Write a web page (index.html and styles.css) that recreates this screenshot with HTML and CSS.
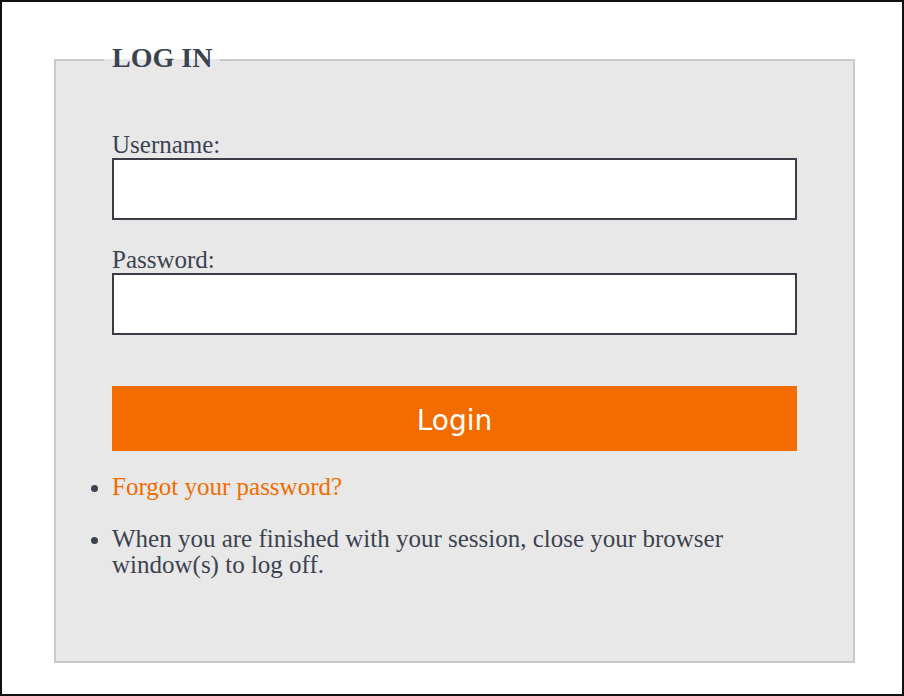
FILE: index.html
```html
<!DOCTYPE html>
<html lang="en">
<head>
    <meta charset="UTF-8">
    <meta name="viewport" content="width=device-width, initial-scale=1.0">
    <title>Log In</title>
    <link rel="stylesheet" href="styles.css">
</head>
<body>
<div class="page">
    <fieldset class="login-box">
        <legend>LOG IN</legend>

        <form id="loginForm">
            <label for="username">Username:</label>
            <input type="text" id="username" name="username">

            <label for="password">Password:</label>
            <input type="password" id="password" name="password">

            <button type="submit">Login</button>
        </form>

        <ul class="notes">
            <li><a href="#">Forgot your password?</a></li>
            <li>When you are finished with your session, close your browser window(s) to log off.</li>
        </ul>
    </fieldset>
</div>
</body>
</html>
```

FILE: styles.css
```css
/* General Reset */
body {
    margin: 0;
    padding: 0;
    background: #ffffff;
    font-family: "Liberation Serif", "Times New Roman", serif;
    color: #3c4350;
}

/* Outer frame */
.page {
    box-sizing: border-box;
    width: 904px;
    height: 696px;
    border: 2px solid #111;
    padding-top: 40px;
}

/* Login box */
.login-box {
    margin: 0 47px 0 52px;
    padding: 54px 56px 56px 56px;
    border: 2px solid #c9c9c9;
    background: #e8e8e8;
}

.login-box legend {
    font-size: 28px;
    font-weight: bold;
    line-height: 32px;
    padding: 0 8px 4px 8px;
    margin-left: -8px;
    color: #3c4350;
}

/* Form */
form {
    display: flex;
    flex-direction: column;
}

label {
    font-size: 25px;
    line-height: 26px;
}

input {
    box-sizing: border-box;
    height: 62px;
    width: 100%;
    margin: 0 0 27px 0;
    border: 2px solid #3a3e44;
    background: #ffffff;
    font-size: 20px;
    padding: 0 10px;
}

#password {
    margin-bottom: 51px;
}

button {
    height: 65px;
    padding-top: 4px;
    border: none;
    background-color: #f36c00;
    color: #ffffff;
    font-family: "DejaVu Sans", Verdana, sans-serif;
    font-size: 28px;
    cursor: pointer;
}

/* Notes list */
.notes {
    margin: 23px 0 27px 0;
    padding: 0;
    font-size: 25px;
    line-height: 26px;
}

.notes li {
    margin-bottom: 26px;
}

.notes li:last-child {
    margin-bottom: 0;
}

.notes a {
    color: #f36c00;
    text-decoration: none;
}
```
